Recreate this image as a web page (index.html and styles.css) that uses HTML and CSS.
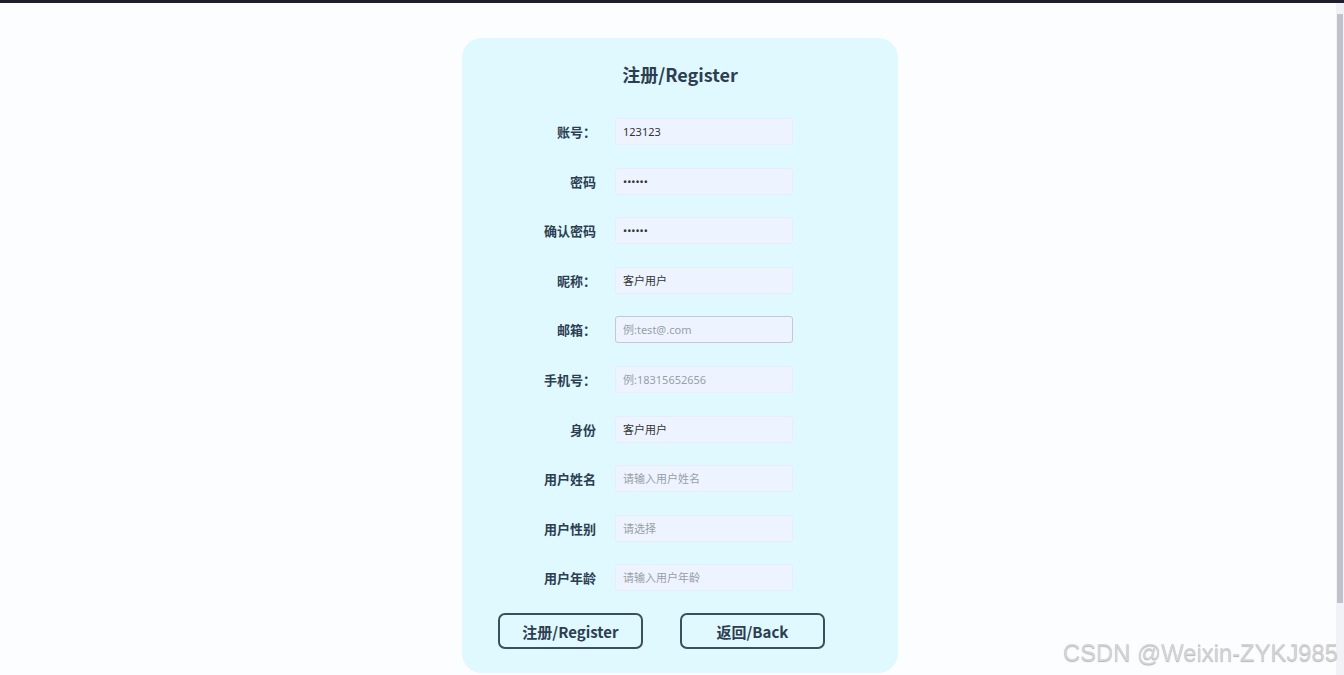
FILE: index.html
```html
<!DOCTYPE html>
<html lang="zh">
<head>
<meta charset="utf-8">
<title>注册/Register</title>
<link rel="stylesheet" href="styles.css">
</head>
<body>
<div class="topbar"></div>
<main class="page">
  <section class="card">
    <h1 class="title">注册/Register</h1>
    <form class="form">
      <label class="lbl">账号：</label><input class="inp" type="text" value="123123">
      <label class="lbl">密码</label><input class="inp" type="password" value="123123">
      <label class="lbl">确认密码</label><input class="inp" type="password" value="123123">
      <label class="lbl">昵称：</label><input class="inp" type="text" value="客户用户">
      <label class="lbl">邮箱：</label><input class="inp focus" type="text" placeholder="例:test@.com">
      <label class="lbl">手机号：</label><input class="inp" type="text" placeholder="例:18315652656">
      <label class="lbl">身份</label><input class="inp" type="text" value="客户用户">
      <label class="lbl">用户姓名</label><input class="inp" type="text" placeholder="请输入用户姓名">
      <label class="lbl">用户性别</label><input class="inp" type="text" placeholder="请选择">
      <label class="lbl">用户年龄</label><input class="inp" type="text" placeholder="请输入用户年龄">
    </form>
    <div class="actions">
      <button class="btn" type="button">注册/Register</button>
      <button class="btn" type="button">返回/Back</button>
    </div>
  </section>
</main>
<div class="scrollbar"><div class="thumb"></div></div>
<div class="watermark">CSDN @Weixin-ZYKJ985</div>
</body>
</html>
```
FILE: styles.css
```css
html, body {
  margin: 0;
  padding: 0;
  height: 100%;
  overflow: hidden;
}
body {
  background: #fcfdff;
  font-family: "Noto Sans CJK SC", "Noto Sans", sans-serif;
  color: #2c3e50;
}
.topbar {
  height: 3px;
  background: #1e1e2c;
}
.page {
  padding-top: 35px;
  padding-left: 462px;
}
.card {
  width: 436px;
  height: 635px;
  box-sizing: border-box;
  background: #e0f8ff;
  border-radius: 20px;
  padding-top: 23px;
}
.title {
  margin: 0;
  text-align: center;
  font-size: 18px;
  line-height: 27px;
  font-weight: 700;
  color: #2c3e50;
}
.form {
  margin-top: 30px;
  display: grid;
  grid-template-columns: 80px 178px;
  column-gap: 19px;
  row-gap: 22.6px;
  padding-left: 54px;
}
.lbl {
  text-align: right;
  font-size: 13px;
  font-weight: 700;
  line-height: 27px;
  color: #2c3e50;
  white-space: nowrap;
}
.inp {
  height: 27px;
  box-sizing: border-box;
  border: 1px solid #e6eefc;
  border-radius: 3px;
  background: #eef4ff;
  padding: 0 7px;
  font-family: "Noto Sans", "Noto Sans CJK SC", sans-serif;
  font-size: 11px;
  color: #333;
  outline: none;
}
.inp::placeholder {
  color: #9a9ea6;
}
.inp.focus {
  border-color: #c3c8d2;
}
.actions {
  margin-top: 22px;
  display: flex;
  gap: 37px;
  padding-left: 36px;
}
.btn {
  width: 145px;
  height: 36px;
  box-sizing: border-box;
  border: 2px solid #3d4f5b;
  border-radius: 7px;
  background: transparent;
  font-family: "Noto Sans CJK SC", "Noto Sans", sans-serif;
  font-size: 15px;
  font-weight: 700;
  color: #2c3e50;
  padding: 0;
}
.scrollbar {
  position: fixed;
  top: 3px;
  right: 0;
  width: 8px;
  bottom: 0;
  background: #f1f1f8;
}
.thumb {
  margin: 11px 1px 0 1px;
  height: 589px;
  background: #c1c1cb;
}
.watermark {
  position: fixed;
  right: 6px;
  bottom: 8px;
  font-family: "Liberation Sans", Arial, sans-serif;
  font-size: 23.8px;
  color: #d4d4d4;
  text-shadow: 0 1px 1px #b4b4b4;
}
```
